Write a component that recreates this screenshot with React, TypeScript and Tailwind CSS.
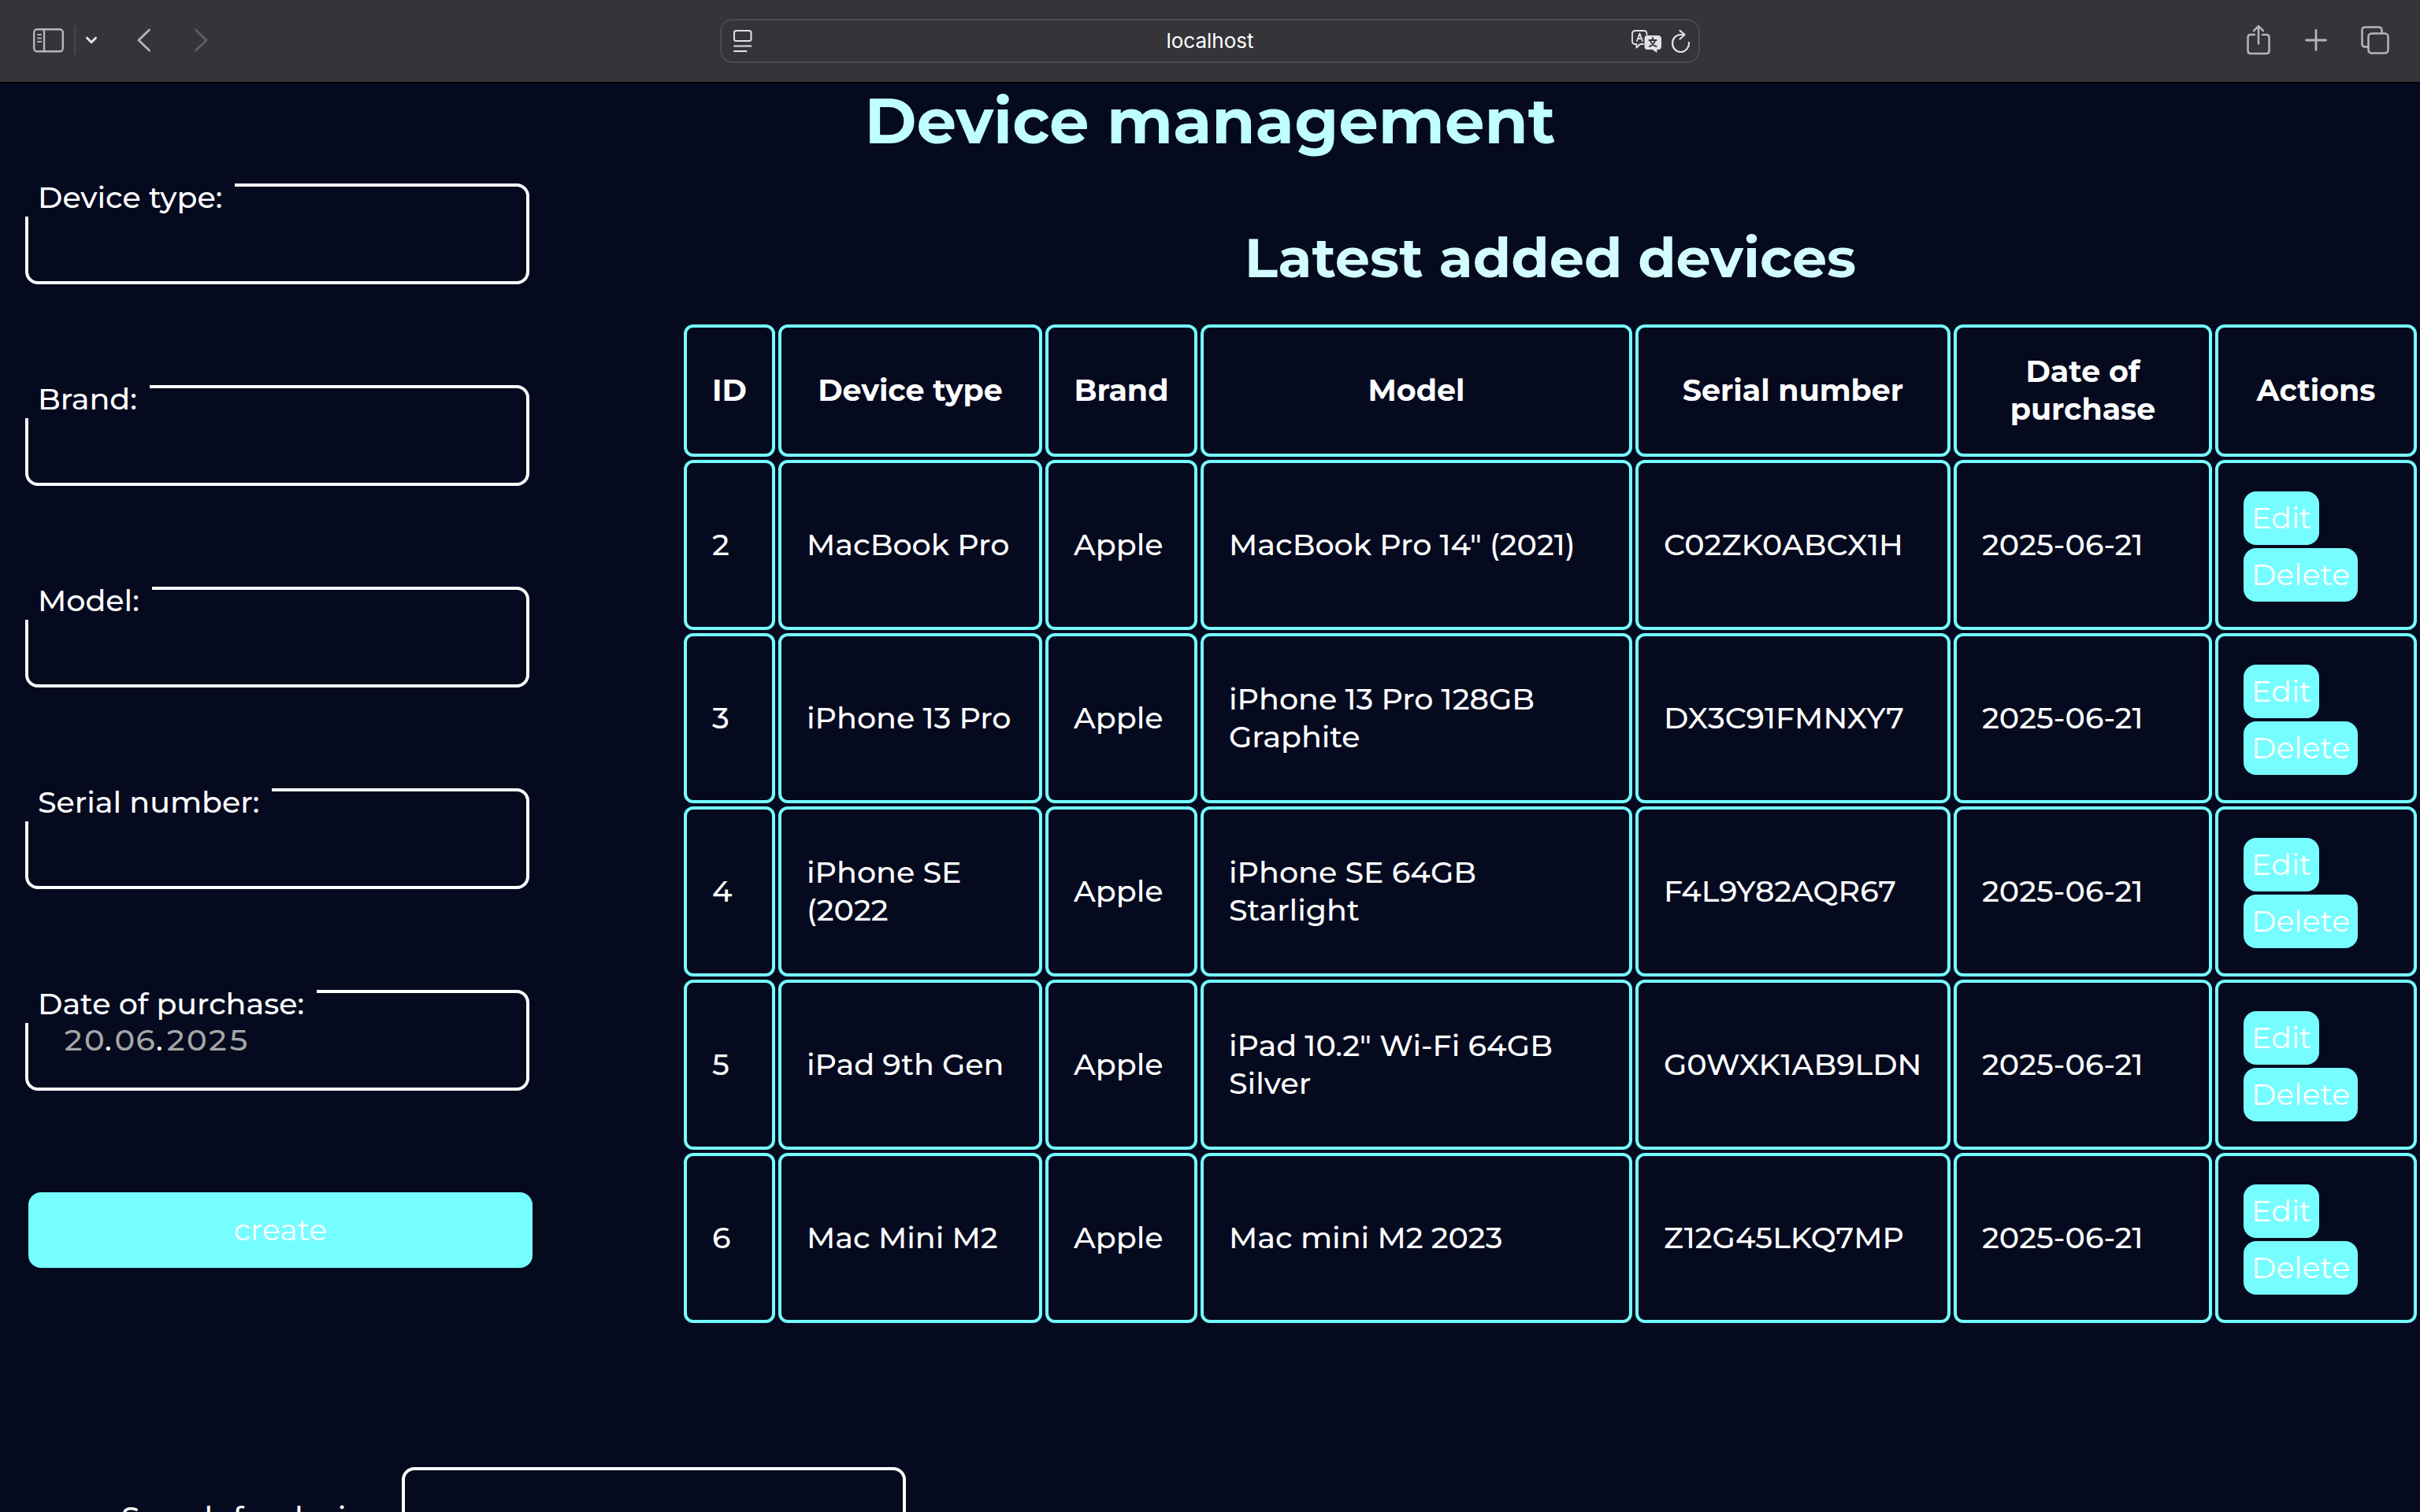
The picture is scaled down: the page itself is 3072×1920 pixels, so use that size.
import type { ReactNode } from "react";

type Device = {
  id: number;
  type: string;
  brand: string;
  model: string;
  serial: string;
  date: string;
};

const devices: Device[] = [
  { id: 2, type: "MacBook Pro", brand: "Apple", model: 'MacBook Pro 14" (2021)', serial: "C02ZK0ABCX1H", date: "2025-06-21" },
  { id: 3, type: "iPhone 13 Pro", brand: "Apple", model: "iPhone 13 Pro 128GB Graphite", serial: "DX3C91FMNXY7", date: "2025-06-21" },
  { id: 4, type: "iPhone SE (2022", brand: "Apple", model: "iPhone SE 64GB Starlight", serial: "F4L9Y82AQR67", date: "2025-06-21" },
  { id: 5, type: "iPad 9th Gen", brand: "Apple", model: 'iPad 10.2" Wi-Fi 64GB Silver', serial: "G0WXK1AB9LDN", date: "2025-06-21" },
  { id: 6, type: "Mac Mini M2", brand: "Apple", model: "Mac mini M2 2023", serial: "Z12G45LKQ7MP", date: "2025-06-21" },
];

const textFields = [
  { id: "device-type", label: "Device type:" },
  { id: "brand", label: "Brand:" },
  { id: "model", label: "Model:" },
  { id: "serial", label: "Serial number:" },
];

const columns = [
  { title: "ID", width: "w-[116px]" },
  { title: "Device type", width: "w-[335px]" },
  { title: "Brand", width: "w-[193px]" },
  { title: "Model", width: "" },
  { title: "Serial number", width: "w-[400px]" },
  { title: "Date of purchase", width: "w-[328px]" },
  { title: "Actions", width: "w-[256px]" },
];

function Toolbar() {
  return (
    <header className="grid h-[106px] shrink-0 grid-cols-[1fr_1244px_1fr] items-center border-b-2 border-black bg-[#353439] text-[#b6b5bb]">
      <div className="flex items-center pb-0.5 pl-[41px]">
        <button type="button" aria-label="Show sidebar">
          <svg className="block h-8 w-[41px]" viewBox="0 0 41 32" fill="none" stroke="currentColor" strokeWidth="2.4" strokeLinecap="round">
            <rect x="2.2" y="2.2" width="36.6" height="28" rx="4" />
            <path d="M15 2.5v27.5" />
            <path d="M7 9h4M7 13.500h4M7 18h4" strokeWidth="1.800" />
          </svg>
        </button>
        <span className="ml-3 h-9 w-0.5 bg-[#48474c]" />
        <button type="button" aria-label="Tab groups" className="ml-3 text-[#e3e2e6]">
          <svg className="block h-3 w-4" viewBox="0 0 16 12" fill="none" stroke="currentColor" strokeWidth="3" strokeLinecap="round" strokeLinejoin="round">
            <path d="M2.500 3.200 8 8.700l5.500-5.500" />
          </svg>
        </button>
        <button type="button" aria-label="Back" className="ml-[49px]">
          <svg className="block h-8 w-5" viewBox="0 0 20 32" fill="none" stroke="currentColor" strokeWidth="2.800" strokeLinecap="round" strokeLinejoin="round">
            <path d="M16.500 3 3 16l13.500 13" />
          </svg>
        </button>
        <button type="button" aria-label="Forward" className="ml-[52px] text-[#5f5e63]">
          <svg className="block h-8 w-5" viewBox="0 0 20 32" fill="none" stroke="currentColor" strokeWidth="2.800" strokeLinecap="round" strokeLinejoin="round">
            <path d="M3.500 3 17 16 3.500 29" />
          </svg>
        </button>
      </div>

      <div className="flex h-14 items-center rounded-2xl border-2 border-[#4c4b51] pl-[14px] pr-2 text-[#e2e2e4]">
        <button type="button" aria-label="Page menu">
          <svg className="block h-[30px] w-[26px]" viewBox="0 0 26 30" fill="none" stroke="currentColor" strokeWidth="2" strokeLinecap="round">
            <rect x="2" y="2" width="21.500" height="13" rx="2.500" />
            <path d="M2 21.500h21.500M2 28h15.500" />
          </svg>
        </button>
        <input
          aria-label="Address"
          defaultValue="localhost"
          className="ml-[46px] min-w-0 flex-1 bg-transparent text-center font-['Inter',sans-serif] text-[26px] leading-8 font-normal text-white outline-none"
        />
        <button type="button" aria-label="Translate page">
          <svg className="block h-[30px] w-10" viewBox="0 0 40 30" fill="none" strokeLinecap="round" strokeLinejoin="round">
            <path d="M16 19H12L7.500 23.500V19H6Q2 19 2 15V6Q2 2 6 2H16.500Q20.500 2 20.500 6V7" stroke="currentColor" strokeWidth="1.800" />
            <path d="M8 15 11.500 5.500 15 15M9.200 12h4.600" stroke="currentColor" strokeWidth="1.800" />
            <path d="M21.500 8H34.500Q39 8 39 12.500V21.500Q39 26 34.500 26H33.500V30L27.500 26H21.500Q17.500 26 17.500 22V12Q17.500 8 21.500 8Z" fill="currentColor" />
            <path d="M28 11v2.500M23.500 14h9M31 14.500Q29 20 24 22M25 14.500Q27 20 32.500 22" stroke="#353439" strokeWidth="2" />
          </svg>
        </button>
        <button type="button" aria-label="Reload" className="ml-2.5">
          <svg className="block h-[30px] w-7" viewBox="0 0 28 30" fill="none" stroke="currentColor" strokeWidth="2.200" strokeLinecap="round" strokeLinejoin="round">
            <path d="M24 17A10.500 11 0 1 1 13.500 7H18" />
            <path d="M12.500 1.800 18.600 7 12.500 12.500" />
          </svg>
        </button>
      </div>

      <div className="flex items-center justify-end gap-[41px] pr-[39px] pb-0.5">
        <button type="button" aria-label="Share">
          <svg className="block h-10 w-8" viewBox="0 0 32 40" fill="none" stroke="currentColor" strokeWidth="2.500" strokeLinecap="round" strokeLinejoin="round">
            <path d="M11 13H6Q2.500 13 2.500 16.500V33.500Q2.500 37 6 37H26Q29.500 37 29.500 33.500V16.500Q29.500 13 26 13H21" />
            <path d="M16 24.500V2.500M10 8.200l6-6 6 6" />
          </svg>
        </button>
        <button type="button" aria-label="New tab">
          <svg className="block size-8" viewBox="0 0 32 32" fill="none" stroke="currentColor" strokeWidth="2.800" strokeLinecap="round">
            <path d="M16 3.500v25M3.500 16h25" />
          </svg>
        </button>
        <button type="button" aria-label="Tab overview">
          <svg className="block size-9" viewBox="0 0 36 36" fill="none" stroke="currentColor" strokeWidth="2.500">
            <rect x="9.500" y="9.500" width="25" height="25" rx="4" />
            <path d="M9 26.500H5.500Q1.500 26.500 1.500 22.500V5.500Q1.500 1.500 5.500 1.500H22.500Q26.500 1.500 26.500 5.500V9" />
          </svg>
        </button>
      </div>
    </header>
  );
}

function Field({ id, label, children }: { id: string; label: string; children: ReactNode }) {
  return (
    <div className="relative">
      <label htmlFor={id} className="absolute -top-1.5 left-0 bg-[#050a1f] px-4 leading-[48px]">
        {label}
      </label>
      {children}
    </div>
  );
}

const boxStyle = "h-32 w-full rounded-2xl border-4 border-white bg-transparent px-11 outline-none";

function DeviceForm() {
  return (
    <form className="w-[644px] shrink-0 pt-[127px]" onSubmit={(e) => e.preventDefault()}>
      <div className="mr-1 flex flex-col gap-32">
        {textFields.map((f) => (
          <Field key={f.id} id={f.id} label={f.label}>
            <input id={f.id} type="text" className={boxStyle} />
          </Field>
        ))}
        <Field id="purchase-day" label="Date of purchase:">
          <div role="group" aria-label="Date of purchase" className={`${boxStyle} flex items-center text-[#a6a6a6] tabular-nums`}>
            <input id="purchase-day" aria-label="Day" defaultValue="20" className="w-[53px] bg-transparent outline-none" />
            <span className="w-3 text-white">.</span>
            <input aria-label="Month" defaultValue="06" className="w-[53px] bg-transparent outline-none" />
            <span className="w-3 text-white">.</span>
            <input aria-label="Year" defaultValue="2025" className="w-[120px] bg-transparent outline-none" />
          </div>
        </Field>
      </div>
      <button type="submit" className="mt-[129px] ml-1 block h-24 w-[640px] rounded-2xl bg-[#76fdff] font-normal text-white">
        create
      </button>
    </form>
  );
}

function DeviceTable() {
  return (
    <section className="min-w-0 flex-1 pt-[177px]">
      <h2 id="latest" className="text-center text-[70px] leading-[88px] font-bold text-[#d2fcfd]">
        Latest added devices
      </h2>
      <table aria-labelledby="latest" className="mt-[37px] w-full table-fixed border-separate border-spacing-1">
        <colgroup>
          {columns.map((c) => (
            <col key={c.title} className={c.width} />
          ))}
        </colgroup>
        <thead>
          <tr>
            {columns.map((c) => (
              <th key={c.title} scope="col" className="h-[168px] rounded-xl border-4 border-[#76fdff] px-5 font-bold">
                {c.title}
              </th>
            ))}
          </tr>
        </thead>
        <tbody>
          {devices.map((d) => (
            <tr key={d.id}>
              {[d.id, d.type, d.brand, d.model, d.serial, d.date].map((value, i) => (
                <td key={i} className="h-[216px] rounded-xl border-4 border-[#76fdff] px-8">
                  {value}
                </td>
              ))}
              <td className="rounded-xl border-4 border-[#76fdff] px-8">
                <div className="flex flex-col items-start gap-1 pt-1">
                  <button type="button" className="h-[68px] rounded-2xl bg-[#76fdff] px-2.5 font-normal text-white">
                    Edit
                  </button>
                  <button type="button" className="h-[68px] rounded-2xl bg-[#76fdff] px-2.5 font-normal text-white">
                    Delete
                  </button>
                </div>
              </td>
            </tr>
          ))}
        </tbody>
      </table>
    </section>
  );
}

export default function App() {
  return (
    <div className="flex h-screen flex-col overflow-hidden bg-[#050a1f] font-['Montserrat','Inter',sans-serif] text-[38px] leading-[48px] font-medium text-white">
      <Toolbar />
      <main className="min-h-0 flex-1 overflow-hidden">
        <h1 className="-mb-24 text-center text-[80px] leading-[96px] font-bold text-[#bfffff]">Device management</h1>
        <div className="flex items-start gap-[188px] pl-8">
          <DeviceForm />
          <DeviceTable />
        </div>
        <form role="search" className="mt-[179px] flex items-center pl-[154px]">
          <label htmlFor="search" className="w-[356px]">
            Search for device:
          </label>
          <input id="search" type="search" className="h-32 w-[640px] rounded-2xl border-4 border-white bg-transparent px-11 outline-none" />
        </form>
      </main>
    </div>
  );
}
